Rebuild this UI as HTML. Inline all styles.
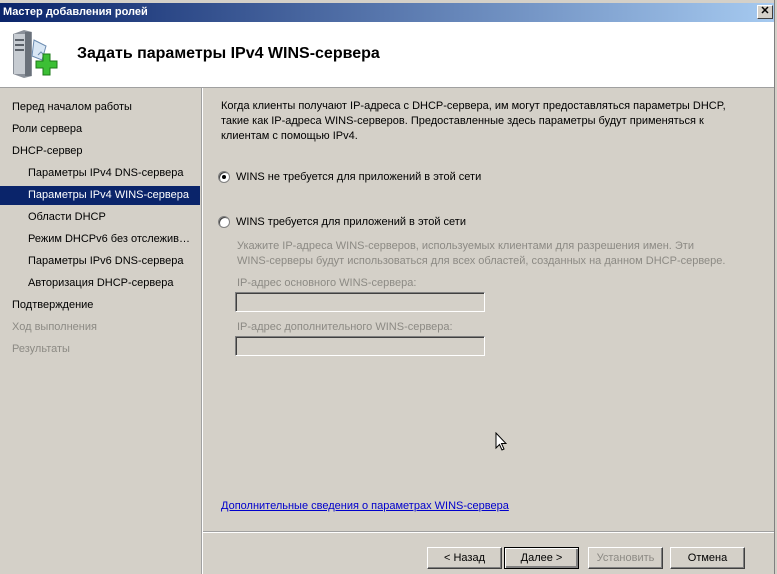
<!DOCTYPE html>
<html><head><meta charset="utf-8"><style>
*{margin:0;padding:0;box-sizing:border-box}
body{width:777px;height:574px;overflow:hidden;background:#d4d0c8;font-family:"Liberation Sans",Tahoma,sans-serif;font-size:11px;color:#000;position:relative}
.a{position:absolute;white-space:nowrap}
#tb{left:0;top:3px;width:774px;height:19px;background:linear-gradient(90deg,#0a246a,#a6caf0);color:#fff;font-weight:bold;font-size:11px;padding:3px 0 0 3px}
#x{left:757px;top:5px;width:16px;height:14px;background:#d4d0c8;border:1px solid;border-color:#fff #404040 #404040 #fff;font-size:11px;line-height:11px;text-align:center;color:#000;font-weight:bold}
#hd{left:0;top:22px;width:774px;height:65px;background:#fff}
#lp{left:0;top:88px;width:200px;height:486px;background:#d4d0c8}
#sep{left:201px;top:88px;width:2px;height:486px;background:#fff;border-left:1px solid #a0a0a0}
.li{left:12px}.si{left:28px}
#sel{left:0;top:186px;width:200px;height:19px;background:#0a246a}
.g{color:#8c8a84}
.box{width:250px;height:20px;border:1px solid;border-color:#808080 #fff #fff #808080;box-shadow:inset 1px 1px 0 #404040;background:#d4d0c8}
.r{width:12px;height:12px;border-radius:50%;background:#fff;border:1px solid #808080;box-shadow:inset 1px 1px 0 #404040}
.btn{top:547px;height:22px;width:75px;border:1px solid;border-color:#fff #404040 #404040 #fff;box-shadow:inset -1px -1px 0 #808080;text-align:center;line-height:20px}
</style></head><body>
<div class="a" style="left:0;top:0;width:777px;height:3px;background:#d4d0c8"></div>
<div class="a" id="tb">Мастер добавления ролей</div>
<div class="a" id="x">✕</div>
<div class="a" id="hd"></div>
<svg class="a" style="left:10px;top:28px" width="50" height="52" viewBox="0 0 50 52">
<path d="M3 6 L14 2 L22 4 L22 48 L14 50 L3 46 Z" fill="#8a9099"/>
<rect x="4" y="6" width="11" height="40" fill="#c7ccd2"/>
<rect x="15" y="4" width="6" height="44" fill="#6a717a"/>
<rect x="5" y="11" width="9" height="2" fill="#5a6068"/><rect x="5" y="16" width="9" height="2" fill="#5a6068"/><rect x="5" y="21" width="9" height="2" fill="#5a6068"/>
<path d="M24 12 L36 18 L32 32 L22 28 Z" fill="#d9e7f5" stroke="#6b8bb0"/>
<path d="M28 27 L31 24 L35 28" fill="none" stroke="#6b8bb0"/>
<path d="M26 33h7v-7h7v7h7v7h-7v7h-7v-7h-7z" fill="#3cbf35" stroke="#1d7a18"/>
</svg>
<div class="a" style="left:77px;top:45px;font-size:16px;font-weight:bold">Задать параметры IPv4 WINS-сервера</div>
<div class="a" style="left:0;top:87px;width:777px;height:1px;background:#a0a0a0"></div>
<div class="a" id="lp"></div>
<div class="a" id="sep"></div>
<div class="a" id="sel"></div>
<div class="a li" style="top:101px">Перед началом работы</div>
<div class="a li" style="top:123px">Роли сервера</div>
<div class="a li" style="top:145px">DHCP-сервер</div>
<div class="a si" style="top:167px">Параметры IPv4 DNS-сервера</div>
<div class="a si" style="top:189px;color:#fff">Параметры IPv4 WINS-сервера</div>
<div class="a si" style="top:211px">Области DHCP</div>
<div class="a si" style="top:233px">Режим DHCPv6 без отслежив…</div>
<div class="a si" style="top:255px">Параметры IPv6 DNS-сервера</div>
<div class="a si" style="top:277px">Авторизация DHCP-сервера</div>
<div class="a li" style="top:299px">Подтверждение</div>
<div class="a li g" style="top:321px">Ход выполнения</div>
<div class="a li g" style="top:343px">Результаты</div>
<div class="a" style="left:221px;top:99px;line-height:15px">Когда клиенты получают IP-адреса с DHCP-сервера, им могут предоставляться параметры DHCP,<br>такие как IP-адреса WINS-серверов. Предоставленные здесь параметры будут применяться к<br>клиентам с помощью IPv4.</div>
<div class="a r" style="left:218px;top:171px"><div style="position:absolute;left:3px;top:3px;width:4px;height:4px;background:#000;border-radius:50%"></div></div>
<div class="a" style="left:236px;top:171px">WINS не требуется для приложений в этой сети</div>
<div class="a r" style="left:218px;top:216px"></div>
<div class="a" style="left:236px;top:216px">WINS требуется для приложений в этой сети</div>
<div class="a g" style="left:237px;top:239px;line-height:15px">Укажите IP-адреса WINS-серверов, используемых клиентами для разрешения имен. Эти<br>WINS-серверы будут использоваться для всех областей, созданных на данном DHCP-сервере.</div>
<div class="a g" style="left:237px;top:277px">IP-адрес основного WINS-сервера:</div>
<div class="a box" style="left:235px;top:292px"></div>
<div class="a g" style="left:237px;top:321px">IP-адрес дополнительного WINS-сервера:</div>
<div class="a box" style="left:235px;top:336px"></div>
<svg class="a" style="left:495px;top:432px" width="12" height="20"><path d="M1 1 L1 16 L4.5 12.5 L7 18 L9 17 L6.5 11.5 L11 11.5 Z" fill="#fff" stroke="#000"/></svg>
<div class="a" style="left:221px;top:500px;color:#0000cc;text-decoration:underline">Дополнительные сведения о параметрах WINS-сервера</div>
<div class="a" style="left:203px;top:531px;width:571px;height:2px;border-top:1px solid #a0a0a0;border-bottom:1px solid #fff"></div>
<div class="a btn" style="left:427px">&lt; Назад</div>
<div class="a btn" style="left:504px;border:1px solid #000;box-shadow:inset 1px 1px 0 #fff,inset -2px -2px 0 #808080">Далее &gt;</div>
<div class="a btn g" style="left:588px">Установить</div>
<div class="a btn" style="left:670px">Отмена</div>
<div class="a" style="left:774px;top:0;width:3px;height:574px;background:#d4d0c8;border-left:1px solid #808080"></div>
</body></html>
